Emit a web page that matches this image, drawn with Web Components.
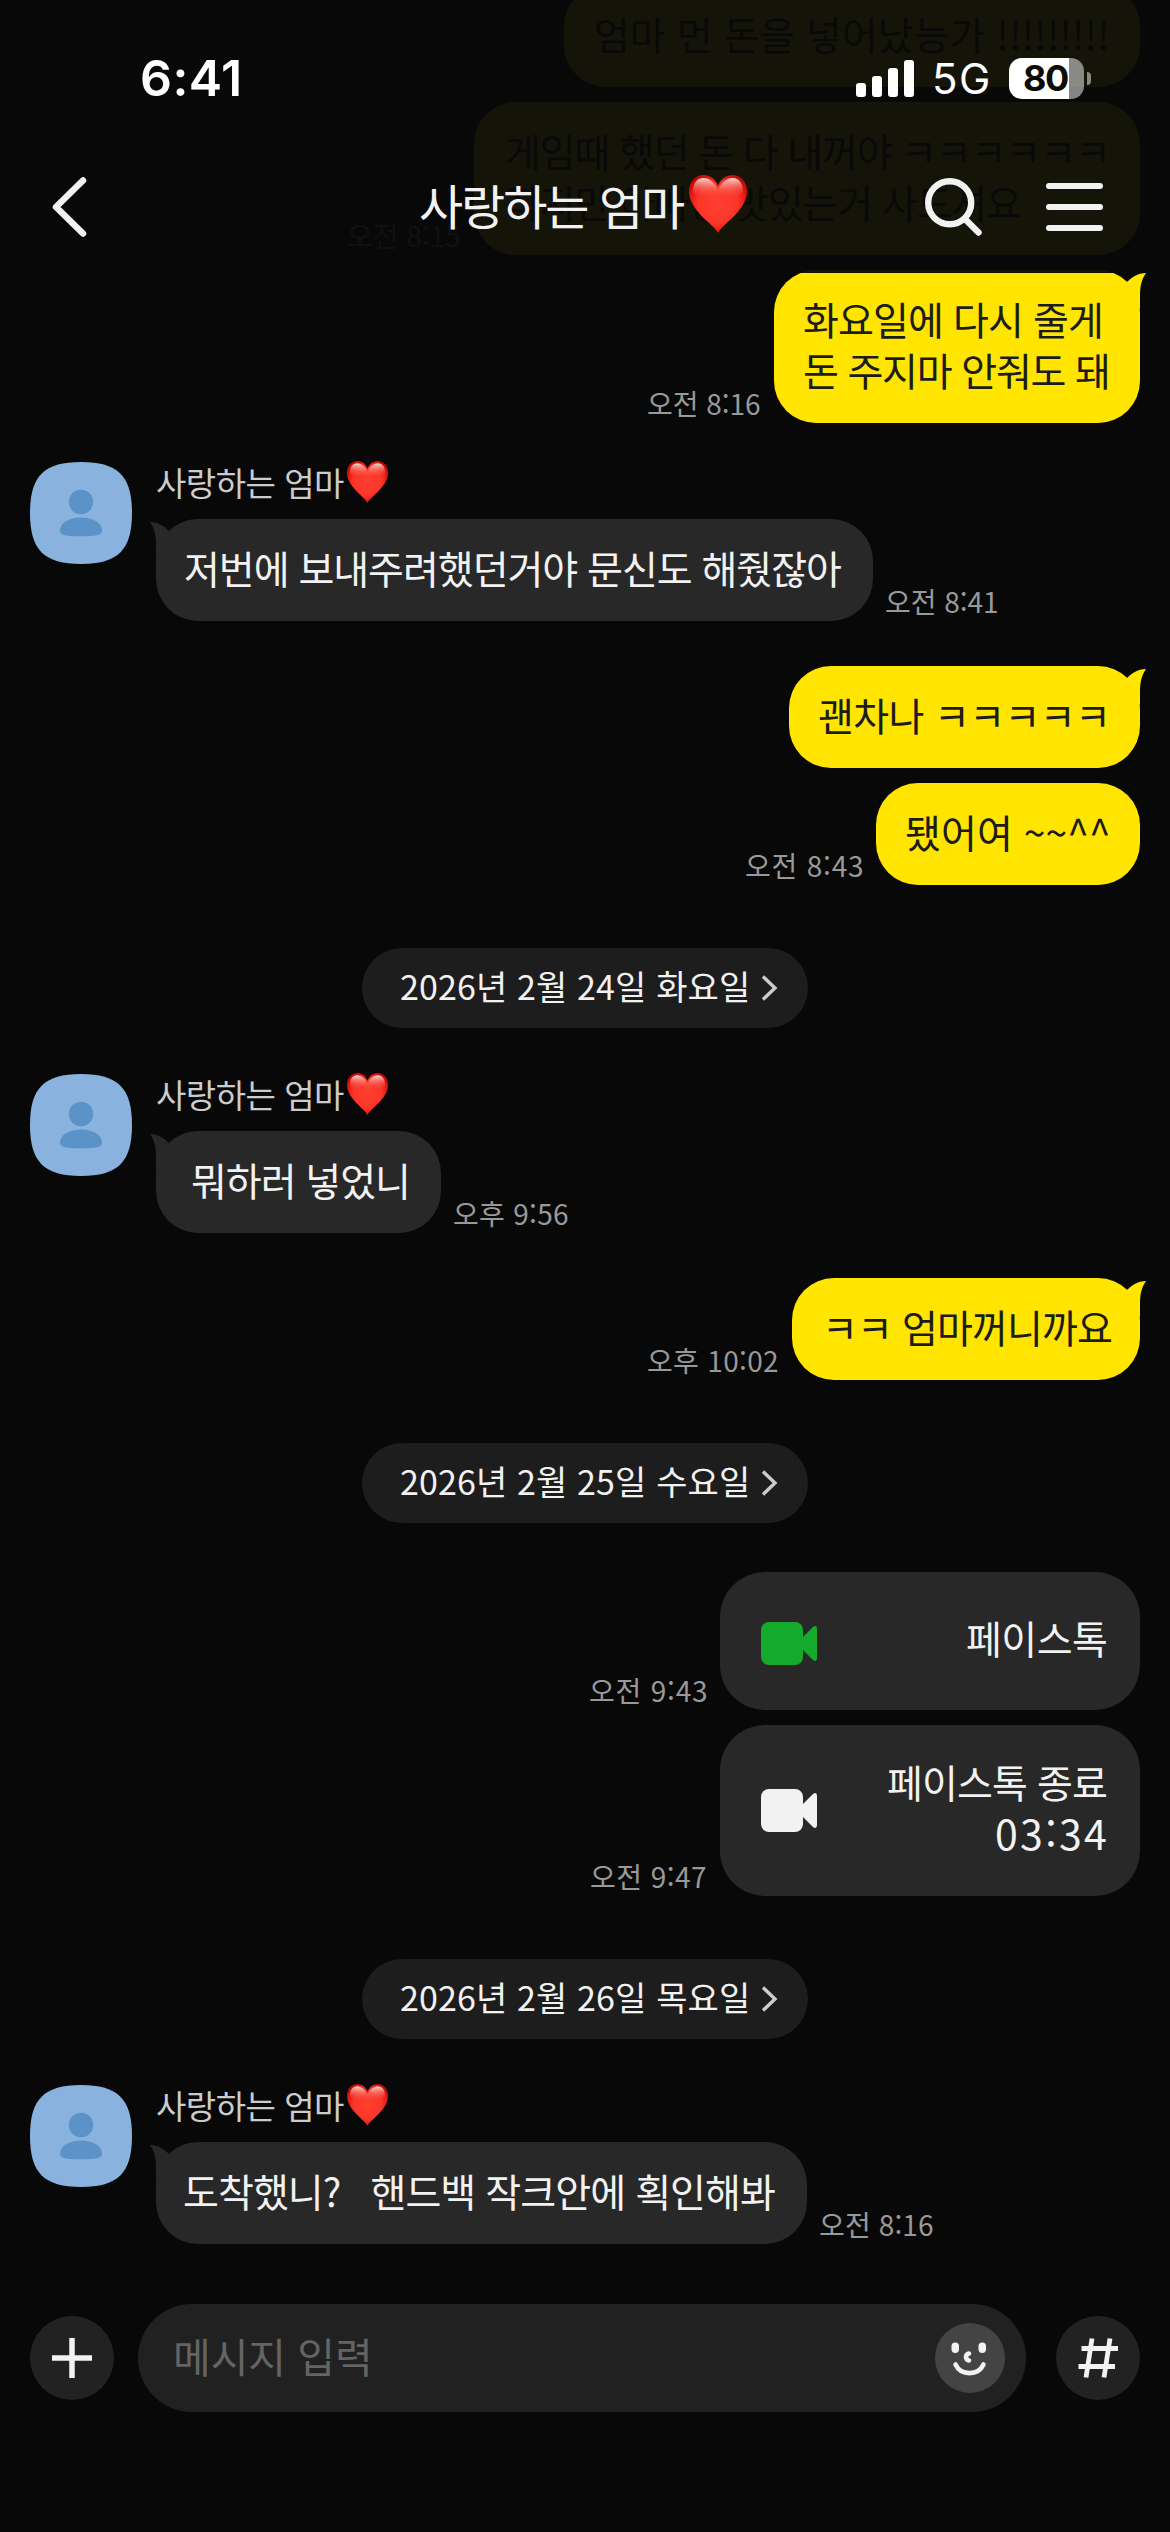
<!DOCTYPE html>
<html lang="ko">
<head>
<meta charset="utf-8">
<title>사랑하는 엄마</title>
<style>
html,body{margin:0;padding:0;background:#080808}
body{width:1170px;height:2532px;overflow:hidden;font-family:"Noto Sans CJK KR","Noto Sans",sans-serif;color:#f2f2f2}
</style>
</head>
<body>
<chat-room>
  <chat-header slot="header"></chat-header>

  <sent-message style="--gap:0px"><chat-bubble mine style="--w:576px;--pl:32px"><ink-text w="510">엄마 먼 돈을 넣어났능가 !!!!!!!!!</ink-text></chat-bubble></sent-message>
  <sent-message time="오전 8:15" tw="112"><chat-bubble mine style="--w:666px;--pl:32px"><ink-text w="599">게임때 했던 돈 다 내꺼야 ㅋㅋㅋㅋㅋㅋ</ink-text><ink-text w="514">작지만 아빠랑 맛있는거 사드셔요</ink-text></chat-bubble></sent-message>
  <sent-message time="오전 8:16" tw="112"><chat-bubble mine tail style="--w:366px;--pl:30px"><ink-text w="296">화요일에 다시 줄게</ink-text><ink-text w="303">돈 주지마 안줘도 돼</ink-text></chat-bubble></sent-message>

  <received-message time="오전 8:41" tw="111" style="--gap:39px"><chat-bubble tail style="--w:717px;--pl:29px"><ink-text w="656">저번에 보내주려했던거야 문신도 해줬잖아</ink-text></chat-bubble></received-message>

  <sent-message style="--gap:45px"><chat-bubble mine tail style="--w:351px;--pl:30px"><ink-text w="286">괜차나 ㅋㅋㅋㅋㅋ</ink-text></chat-bubble></sent-message>
  <sent-message time="오전 8:43" tw="116"><chat-bubble mine style="--w:264px;--pl:30px"><ink-text w="203">됐어여 ~~^^</ink-text></chat-bubble></sent-message>

  <date-pill>2026년 2월 24일 화요일</date-pill>

  <received-message time="오후 9:56" tw="114" style="--gap:46px"><chat-bubble tail style="--w:285px;--pl:36px"><ink-text w="214">뭐하러 넣었니</ink-text></chat-bubble></received-message>

  <sent-message time="오후 10:02" tw="130" style="--gap:45px"><chat-bubble mine tail style="--w:348px;--pl:36px"><ink-text w="283">ㅋㅋ 엄마꺼니까요</ink-text></chat-bubble></sent-message>

  <date-pill>2026년 2월 25일 수요일</date-pill>

  <sent-message time="오전 9:43" tw="116" style="--gap:49px"><call-card style="--h:138px;--icon:#14aa2b;--shift:5px"><ink-text w="139">페이스톡</ink-text></call-card></sent-message>
  <sent-message time="오전 9:47" tw="115"><call-card style="--h:171px;--icon:#f2f2f2"><ink-text w="218">페이스톡 종료</ink-text><ink-text w="109" style="font-size:41px">03:34</ink-text></call-card></sent-message>

  <date-pill>2026년 2월 26일 목요일</date-pill>

  <received-message time="오전 8:16" tw="113" style="--gap:46px"><chat-bubble tail style="--w:651px;--pl:28px"><ink-text w="591">도착했니?   핸드백 작크안에 획인해봐</ink-text></chat-bubble></received-message>

  <message-bar slot="footer"></message-bar>
</chat-room>

<script>
function define(name, html) {
  customElements.define(name, class extends HTMLElement {
    constructor() {
      super();
      this.attachShadow({ mode: 'open' }).innerHTML =
        typeof html === 'function' ? html(this) : html;
    }
  });
}

define('chat-room', `<style>
:host{display:flex;flex-direction:column;position:relative;width:1170px;height:2532px;overflow:hidden;background:#080808}
.list{display:flex;flex-direction:column;margin-top:-15px}
.top{position:absolute;left:0;top:0;width:1170px;z-index:2}
</style>
<div class="top"><slot name="header"></slot></div>
<div class="list"><slot></slot></div>
<slot name="footer"></slot>`);

define('heart-icon', `<style>:host{display:block;flex:none}svg{display:block;width:100%;height:100%;overflow:visible}</style>
<svg viewBox="0 0 58 58" preserveAspectRatio="none">
<defs>
<radialGradient id="b" cx=".5" cy=".5" r=".62"><stop offset="0" stop-color="#ff3f30"/><stop offset=".55" stop-color="#fb3628"/><stop offset=".8" stop-color="#e31510"/><stop offset="1" stop-color="#a80400"/></radialGradient>
<linearGradient id="g" x1="0" y1="0" x2="0" y2="1"><stop offset="0" stop-color="#fff" stop-opacity=".85"/><stop offset=".4" stop-color="#ffb0a8" stop-opacity=".5"/><stop offset="1" stop-color="#ff4436" stop-opacity="0"/></linearGradient>
</defs>
<path d="M29 58C25 49 0 36 0 16C0 7 6 0 14.500 0C22 0 27 5 29 11C31 5 36 0 43.500 0C52 0 58 7 58 16C58 36 33 49 29 58Z" fill="url(#b)"/>
<path d="M4 17C4 8 8 3 14.500 3C21 3 26 8 29 15C32 8 37 3 43.500 3C50 3 54 8 54 17C50 25 8 25 4 17Z" fill="url(#g)"/>
</svg>`);

define('chat-header', `<style>
:host{display:block;height:273px;background:rgba(8,8,8,.95)}
.status{display:flex;align-items:center;height:156px;padding-left:142px;font-family:Inter,sans-serif;color:#fff}
.clock{font-size:50px;font-weight:600;line-height:60px}
.bars{width:58px;height:37px;margin-left:617px;flex:none}
.net{font-size:42px;font-weight:400;line-height:50px;margin-left:21px;padding-top:2px}
.bat{display:flex;align-items:center;margin-left:21px;gap:3px}
.cell{display:flex;align-items:center;width:60px;height:41px;padding-left:15px;border-radius:13px;background:linear-gradient(90deg,#fff 60px,rgba(255,255,255,.5) 60px);color:#0b0b08;font-size:36px;font-weight:700;line-height:41px}
.nub{width:4px;height:13px;border-radius:0 5px 5px 0;background:rgba(255,255,255,.5)}
.bar{display:flex;align-items:center;height:102px;padding-left:52px}
svg{display:block;flex:none}
.title{font-size:48px;line-height:60px;margin-left:333px;padding-bottom:7px}
heart-icon{width:58px;height:58px;margin:0 0 6px 5px}
.find{margin-left:178px}
.menu{margin-left:64px}
</style>
<div class="status">
<ink-text class="clock" w="97">6:41</ink-text>
<svg class="bars" viewBox="0 0 58 37" fill="#fff"><rect y="23" width="10" height="14" rx="3"/><rect x="16" y="16" width="10" height="21" rx="3"/><rect x="32" y="8" width="10" height="29" rx="3"/><rect x="48" width="10" height="37" rx="3"/></svg>
<ink-text class="net" w="53">5G</ink-text>
<div class="bat"><div class="cell"><ink-text w="44">80</ink-text></div><div class="nub"></div></div>
</div>
<div class="bar">
<svg width="35" height="60" viewBox="0 0 35 60" fill="none" stroke="#f2f2f2" stroke-width="6.500" stroke-linecap="round" stroke-linejoin="round"><path d="M31 3.500L4 30L31 56.500"/></svg>
<ink-text class="title" w="264">사랑하는 엄마</ink-text>
<heart-icon></heart-icon>
<svg class="find" width="57" height="59" viewBox="0 0 57 59" fill="none" stroke="#f2f2f2" stroke-width="6.400" stroke-linecap="round"><ellipse cx="24.700" cy="24.700" rx="21.500" ry="21.500"/><path d="M40 41L53.500 54.500"/></svg>
<svg class="menu" width="57" height="48" viewBox="0 0 57 48" stroke="#f2f2f2" stroke-width="6" stroke-linecap="round"><path d="M3 3H54M3 24H54M3 45H54"/></svg>
</div>`);

define('chat-bubble', el => `<style>
:host{display:block;position:relative;box-sizing:border-box;flex:none;width:var(--w);padding:23px 0 28px var(--pl);border-radius:42px;background:#282828;color:#f2f2f2;font-size:39px;line-height:51px}
:host([mine]){background:#ffe500;color:#1c1c1a}
svg{position:absolute;top:3px;left:-6px;display:block}
:host([mine]) svg{left:auto;right:-6px;transform:scaleX(-1)}
</style>
${el.hasAttribute('tail') ? `<svg width="40" height="36" viewBox="0 0 40 36" fill="${el.hasAttribute('mine') ? '#ffe500' : '#282828'}"><path d="M0 0C8 0 14 4 19 9L22 22L6 36V22C6 12 4 6 0 0Z"/></svg>` : ''}
<slot></slot>`);

define('sent-message', el => `<style>
:host{display:flex;justify-content:flex-end;align-items:flex-end;gap:14px;margin-top:var(--gap,15px);padding-right:30px}
.time{color:#999;font-size:28px;line-height:28px;margin-bottom:6px}
</style>
${el.hasAttribute('time') ? `<ink-text class="time" w="${el.getAttribute('tw')}">${el.getAttribute('time')}</ink-text>` : ''}<slot></slot>`);

define('user-avatar', `<style>:host{display:block;flex:none;width:102px;height:102px}svg{display:block}</style>
<svg width="102" height="102" viewBox="0 0 102 102"><path d="M51 0C88 0 102 14 102 51S88 102 51 102 0 88 0 51 14 0 51 0Z" fill="#89b3de"/><circle cx="51" cy="40" r="12.200" fill="#5b93c9"/><path d="M51 55.500C63 55.500 72 61 72 68.500C72 72.500 69 74.300 51 74.300S30 72.500 30 68.500C30 61 39 55.500 51 55.500Z" fill="#5b93c9"/></svg>`);

define('received-message', el => `<style>
:host{display:flex;gap:24px;margin-top:var(--gap,15px);padding-left:30px}
.name{display:flex;align-items:flex-start;height:57px;color:#ccc;font-size:33px;line-height:41px;padding-left:1px}
heart-icon{width:41px;height:42px;margin:-1px 0 0 3px}
.row{display:flex;align-items:flex-end;gap:13px}
.time{color:#999;font-size:28px;line-height:28px;margin-bottom:6px}
</style>
<user-avatar></user-avatar>
<div><div class="name"><ink-text w="187">사랑하는 엄마</ink-text><heart-icon></heart-icon></div>
<div class="row"><slot></slot><ink-text class="time" w="${el.getAttribute('tw')}">${el.getAttribute('time')}</ink-text></div></div>`);

define('date-pill', el => `<style>
:host{display:flex;align-self:center;align-items:center;box-sizing:border-box;width:446px;height:80px;margin-top:63px;padding-left:39px;gap:14px;border-radius:40px;background:#1d1d1d;font-size:34px;line-height:40px}
ink-text{padding-bottom:4px}
svg{display:block}
</style>
<ink-text w="346">${el.textContent}</ink-text>
<svg width="17" height="26" viewBox="0 0 17 26" fill="none" stroke="#ccc" stroke-width="3.400"><path d="M2 1.500L14 13L2 24.500"/></svg>`);

define('call-card', `<style>
:host{display:flex;align-items:center;justify-content:space-between;box-sizing:border-box;flex:none;width:420px;height:var(--h);padding:0 34px 0 41px;border-radius:45px;background:#282828;font-size:39px;line-height:51px}
svg{display:block;fill:var(--icon);margin-top:var(--shift,0)}
.txt{display:flex;flex-direction:column;align-items:flex-end;padding-bottom:7px}
</style>
<svg width="56" height="43" viewBox="0 0 56 43"><rect width="42" height="43" rx="8"/><path d="M42 15L52 5Q56 2.500 56 7V36Q56 40.500 52 38L42 28Z"/></svg>
<div class="txt"><slot></slot></div>`);

define('message-bar', `<style>
:host{display:flex;align-items:center;margin-top:60px;padding:0 30px;height:108px}
svg{display:block;flex:none}
.field{display:flex;align-items:center;justify-content:space-between;box-sizing:border-box;width:888px;height:108px;margin:0 30px 0 24px;padding:0 21px 0 38px;border-radius:54px;background:#212121;color:#646464;font-size:41px;line-height:50px}
ink-text{padding-bottom:6px}
</style>
<svg width="84" height="84" viewBox="0 0 84 84"><circle cx="42" cy="42" r="42" fill="#222"/><path d="M22 42H62M42 22V62" stroke="#f2f2f2" stroke-width="5.500"/></svg>
<div class="field"><ink-text w="192">메시지 입력</ink-text>
<svg width="70" height="70" viewBox="0 0 70 70"><circle cx="35" cy="35" r="35" fill="#444"/><g fill="#f2f2f2"><rect x="16.500" y="19.500" width="7.500" height="10.500" rx="3.700"/><rect x="43.500" y="19.500" width="7.500" height="10.500" rx="3.700"/></g><g fill="none" stroke="#f2f2f2" stroke-width="4.600" stroke-linecap="round"><path d="M34 30.500C30 31.500 30 36.500 34 37.500"/><path d="M20.500 41.500C26 53 43 53 48.500 41.500"/></g></svg></div>
<svg width="84" height="84" viewBox="0 0 84 84"><circle cx="42" cy="42" r="42" fill="#222"/><path d="M25.500 32.500H62M22.500 50.500H59M36 22.500L30 61.500M54 22.500L48 61.500" stroke="#f2f2f2" stroke-width="4.800" fill="none"/></svg>`);

/* Single line of text whose tracking is tuned so the visible glyphs span exactly "w" pixels. */
const ctx = document.createElement('canvas').getContext('2d');
customElements.define('ink-text', class extends HTMLElement {
  constructor() {
    super();
    this.attachShadow({ mode: 'open' }).innerHTML =
      '<style>:host{display:block;flex:none;white-space:pre}</style><slot></slot>';
  }
  connectedCallback() {
    const s = getComputedStyle(this), text = this.textContent, n = text.length, w = +this.getAttribute('w');
    ctx.font = `${s.fontWeight} ${s.fontSize} ${s.fontFamily}`;
    // side bearings of the first and last glyph
    const left = -ctx.measureText(text[0]).actualBoundingBoxLeft;
    const end = ctx.measureText(text[n - 1]);
    const right = end.width - end.actualBoundingBoxRight;
    this.style.width = w + 'px';
    this.style.letterSpacing = '-1px';
    const range = document.createRange();
    range.selectNodeContents(this);
    const natural = range.getBoundingClientRect().width + n;
    this.style.letterSpacing = ((w - natural + left + right) / (n - 1)).toFixed(3) + 'px';
    this.style.textIndent = (-left).toFixed(2) + 'px';
  }
});
</script>
</body>
</html>
